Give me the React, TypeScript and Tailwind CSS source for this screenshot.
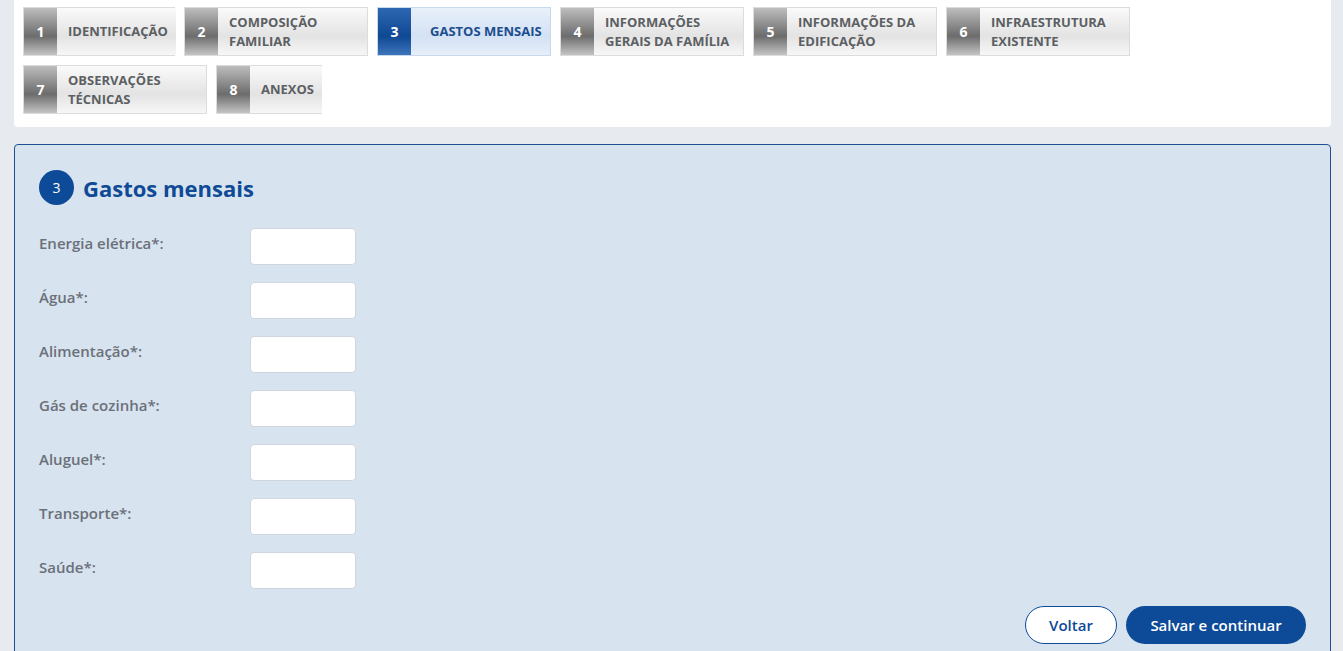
import React from 'react';

interface Step {
  n: number;
  label: string[];
  active?: boolean;
}

const steps: Step[] = [
  { n: 1, label: ['IDENTIFICAÇÃO'] },
  { n: 2, label: ['COMPOSIÇÃO', 'FAMILIAR'] },
  { n: 3, label: ['GASTOS MENSAIS'], active: true },
  { n: 4, label: ['INFORMAÇÕES', 'GERAIS DA FAMÍLIA'] },
  { n: 5, label: ['INFORMAÇÕES DA', 'EDIFICAÇÃO'] },
  { n: 6, label: ['INFRAESTRUTURA', 'EXISTENTE'] },
  { n: 7, label: ['OBSERVAÇÕES', 'TÉCNICAS'] },
  { n: 8, label: ['ANEXOS'] },
];

const fields = [
  'Energia elétrica*:',
  'Água*:',
  'Alimentação*:',
  'Gás de cozinha*:',
  'Aluguel*:',
  'Transporte*:',
  'Saúde*:',
];

function StepTab({ step }: { step: Step }) {
  const width = step.n === 8 ? 'w-[106px]' : step.n === 1 ? 'w-[152px]' : step.active ? 'w-[174px]' : 'w-[184px]';
  return (
    <div className={`flex h-[49px] border ${step.active ? 'border-[#c9d9ec]' : 'border-[#dcdcdc]'} ${width}`}>
      <div
        className={`w-[33px] shrink-0 flex items-center justify-center text-white font-bold text-[14px] ${
          step.active
            ? 'bg-[linear-gradient(180deg,#2d67b1_0%,#0f4893_60%,#3d75bb_100%)]'
            : 'bg-[linear-gradient(180deg,#bdbdbd_0%,#6c6c6c_60%,#c4c4c4_100%)]'
        }`}
      >
        {step.n}
      </div>
      <div
        className={`flex-1 flex flex-col justify-center pr-[8px] text-[13px] font-bold leading-[19px] ${
          step.active
            ? 'pl-[19px] text-[#1c4d8f] bg-[linear-gradient(180deg,#e8f0fa_0%,#d3e2f4_60%,#e6eef9_100%)]'
            : 'pl-[11px] text-[#5c5f63] bg-[linear-gradient(180deg,#fafafa_0%,#e3e3e3_60%,#f7f7f7_100%)]'
        }`}
      >
        {step.label.map((l) => (
          <span key={l} className="whitespace-nowrap">
            {l}
          </span>
        ))}
      </div>
    </div>
  );
}

export default function App() {
  return (
    <div
      className="min-h-screen bg-[#e7eaee] pl-[14px] pr-[12px]"
      style={{ fontFamily: '"Open Sans", "Liberation Sans", sans-serif' }}
    >
      {/* Steps */}
      <div className="bg-white rounded-b-[4px] pl-[9px] pt-[7px] pb-[13px]">
        <div className="max-w-[1150px] flex flex-wrap gap-x-[9px] gap-y-[9px]">
          {steps.map((s) => (
            <StepTab key={s.n} step={s} />
          ))}
        </div>
      </div>

      {/* Form */}
      <div className="mt-[17px] bg-[#d7e3ef] border border-[#1f4f92] rounded-[4px] px-[24px] pt-[25px] pb-[24px]">
        <div className="flex items-center gap-[9px]">
          <div className="w-[35px] h-[35px] rounded-full bg-[#0d4a97] text-white text-[14px] flex items-center justify-center">
            3
          </div>
          <h2 className="text-[22px] font-bold text-[#0e4a95] leading-none">Gastos mensais</h2>
        </div>

        <div className="mt-[23px] flex flex-col gap-[17px]">
          {fields.map((f) => (
            <div key={f} className="flex items-start">
              <label className="w-[211px] pt-[4px] text-[15px] font-semibold leading-[22px] text-[#6b7079]">
                {f}
              </label>
              <input
                type="text"
                className="w-[106px] h-[37px] bg-white border border-[#cfd6de] rounded-[4px] outline-none"
              />
            </div>
          ))}
        </div>

        <div className="mt-[17px] flex justify-end gap-[9px]">
          <button className="w-[92px] h-[38px] rounded-full bg-white border border-[#0d4a97] text-[#0d4a97] text-[15px] font-semibold">
            Voltar
          </button>
          <button className="w-[180px] h-[38px] rounded-full bg-[#0d4a97] text-white text-[15px] font-semibold">
            Salvar e continuar
          </button>
        </div>
      </div>
    </div>
  );
}
